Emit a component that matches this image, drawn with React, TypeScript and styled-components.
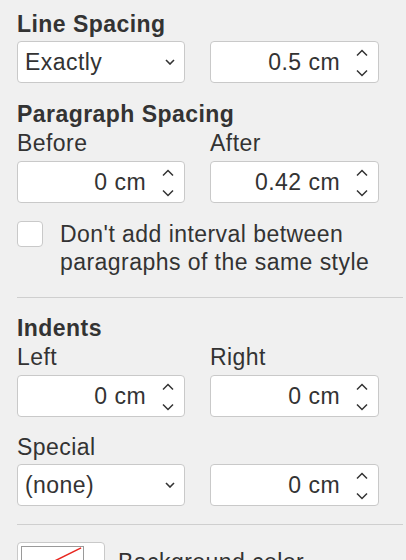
import styled, { createGlobalStyle } from 'styled-components'

const GlobalStyle = createGlobalStyle`
	html, body {
		margin: 0;
		padding: 0;
		height: 100%;
		overflow: hidden;
		background: #f0f0f0;
	}
	body {
		font-family: 'Liberation Sans', Arial, sans-serif;
		color: #333;
	}
`

const Panel = styled.div`
	padding: 11px 3px 0 17px;
	font-size: 23px;
	letter-spacing: 0.45px;
`

const Heading = styled.h2<{ $top?: number }>`
	margin: ${(p) => p.$top ?? 0}px 0 0;
	font-size: 23px;
	font-weight: 700;
	line-height: 26px;
`

const Row = styled.div<{ $top?: number }>`
	display: grid;
	grid-template-columns: 168px 169px;
	column-gap: 25px;
	margin-top: ${(p) => p.$top ?? 0}px;
`

const Label = styled.div`
	line-height: 26px;
	white-space: nowrap;
`

const Control = styled.div`
	box-sizing: border-box;
	height: 42px;
	background: #fff;
	border: 1px solid #c9c9c9;
	border-radius: 4px;
	display: flex;
	align-items: center;
`

const SelectText = styled.span`
	flex: 1;
	padding-left: 7px;
`

const Chevron = styled.svg`
	width: 10px;
	height: 6px;
	margin-right: 9px;
`

const NumberText = styled.span`
	flex: 1;
	text-align: right;
	padding-right: 16px;
`

const Spinner = styled.svg`
	width: 12px;
	height: 30px;
	margin-right: 10px;
`

const CheckRow = styled.div`
	display: flex;
	gap: 17px;
	margin-top: 17px;
	line-height: 28px;
`

const Box = styled.div`
	box-sizing: border-box;
	flex: none;
	width: 26px;
	height: 26px;
	margin-top: 1px;
	background: #fff;
	border: 1px solid #c9c9c9;
	border-radius: 4px;
`

const Divider = styled.hr<{ $top: number }>`
	margin: ${(p) => p.$top}px 0 0;
	border: none;
	border-top: 1px solid #cfcfcf;
	height: 0;
`

const ColorRow = styled.div`
	display: flex;
	align-items: center;
	gap: 13px;
	margin-top: 17px;
`

const Swatch = styled.div`
	box-sizing: border-box;
	width: 88px;
	height: 40px;
	padding: 3px;
	background: #fff;
	border: 1px solid #c9c9c9;
	border-radius: 4px;
`

const SwatchInner = styled.svg`
	display: block;
	width: 63px;
	height: 32px;
	border: 1px solid #9a9a9a;
	box-sizing: border-box;
`

const Select = ({ value }: { value: string }) => (
	<Control>
		<SelectText>{value}</SelectText>
		<Chevron viewBox="0 0 10 6">
			<path d="M1 1 L5 5 L9 1" fill="none" stroke="#333" strokeWidth="1.6" />
		</Chevron>
	</Control>
)

const NumberInput = ({ value }: { value: string }) => (
	<Control>
		<NumberText>{value}</NumberText>
		<Spinner viewBox="0 0 12 30">
			<path d="M1 8.5 L6 3.5 L11 8.5" fill="none" stroke="#333" strokeWidth="1.5" />
			<path d="M1 23.5 L6 28.5 L11 23.5" fill="none" stroke="#333" strokeWidth="1.5" />
		</Spinner>
	</Control>
)

const App = () => {
	return (
		<>
			<GlobalStyle />
			<Panel>
				<Heading>Line Spacing</Heading>
				<Row $top={4}>
					<Select value="Exactly" />
					<NumberInput value="0.5 cm" />
				</Row>

				<Heading $top={18}>Paragraph Spacing</Heading>
				<Row $top={3}>
					<Label>Before</Label>
					<Label>After</Label>
				</Row>
				<Row $top={5}>
					<NumberInput value="0 cm" />
					<NumberInput value="0.42 cm" />
				</Row>

				<CheckRow>
					<Box />
					<span>
						Don't add interval between
						<br />
						paragraphs of the same style
					</span>
				</CheckRow>

				<Divider $top={21} />

				<Heading $top={17}>Indents</Heading>
				<Row $top={3}>
					<Label>Left</Label>
					<Label>Right</Label>
				</Row>
				<Row $top={5}>
					<NumberInput value="0 cm" />
					<NumberInput value="0 cm" />
				</Row>
				<Row $top={17}>
					<Label>Special</Label>
				</Row>
				<Row $top={4}>
					<Select value="(none)" />
					<NumberInput value="0 cm" />
				</Row>

				<Divider $top={18} />

				<ColorRow>
					<Swatch>
						<SwatchInner viewBox="0 0 63 32">
							<line x1="62" y1="1" x2="1" y2="31" stroke="#e8261f" strokeWidth="1.6" />
						</SwatchInner>
					</Swatch>
					<span>Background color</span>
				</ColorRow>
			</Panel>
		</>
	)
}

export default App
